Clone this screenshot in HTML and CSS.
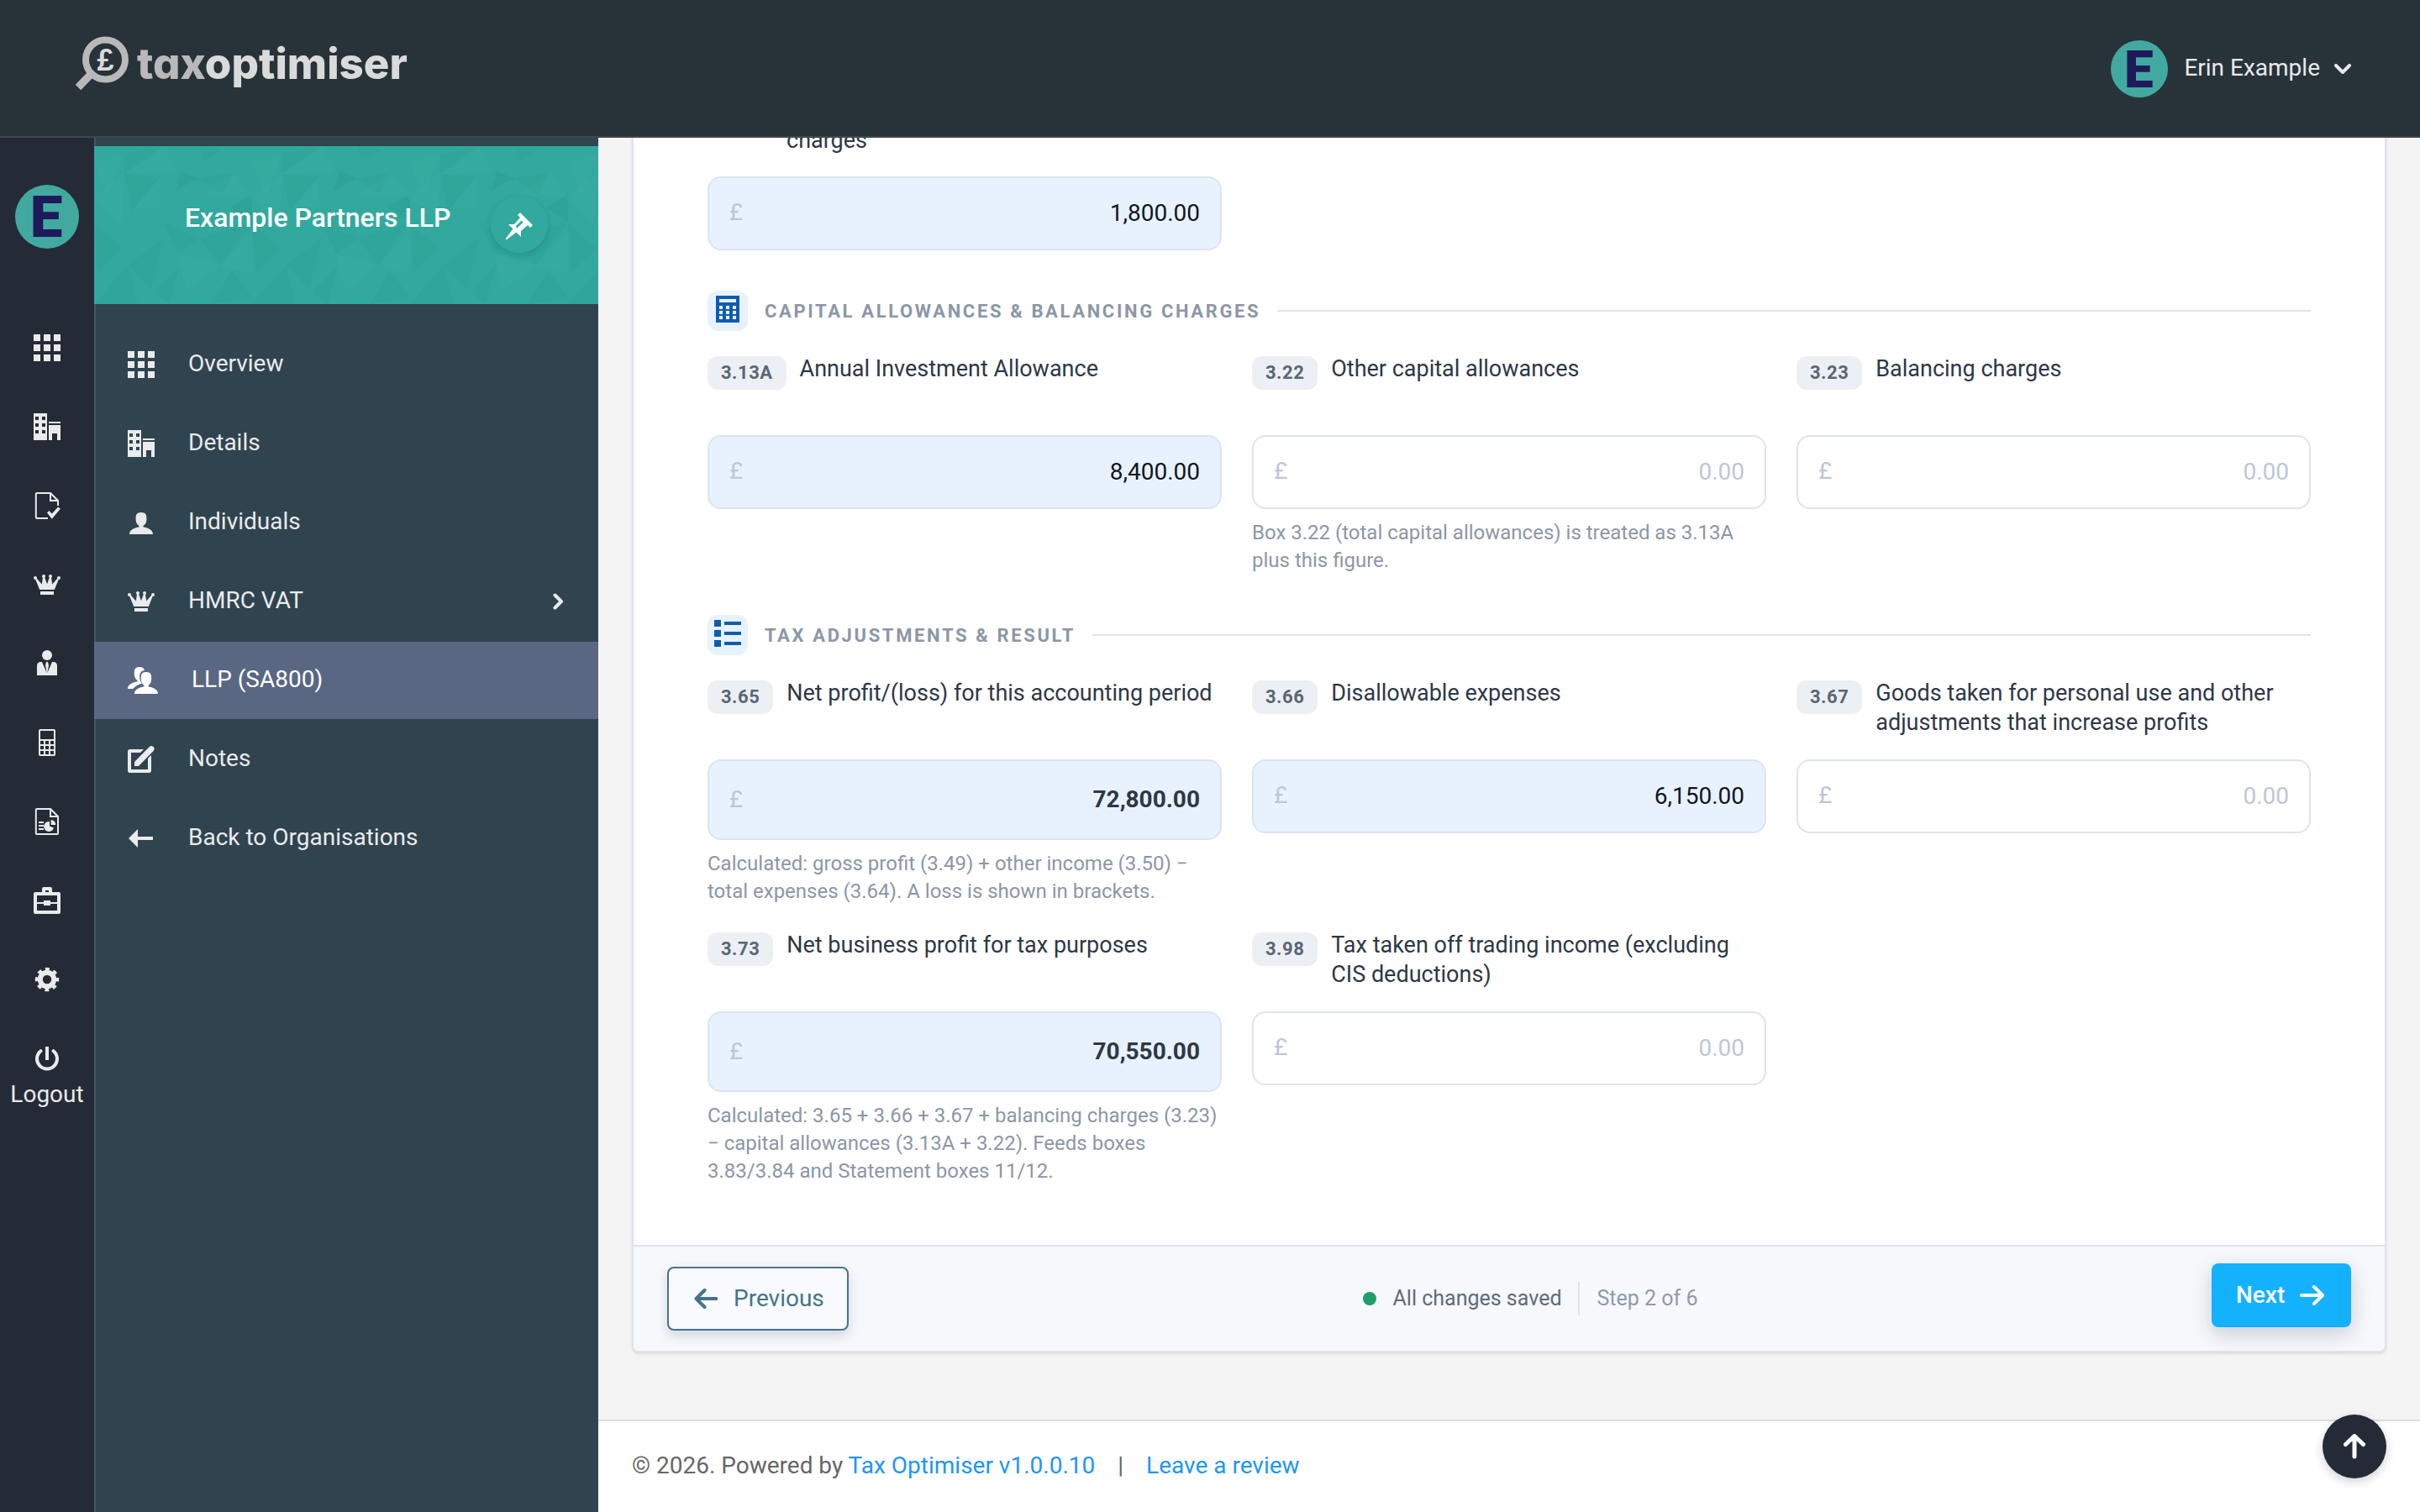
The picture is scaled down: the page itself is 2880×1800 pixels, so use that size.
FILE: index.html
```
<!DOCTYPE html>
<html lang="en">
<head>
  <meta charset="UTF-8" />
  <meta name="viewport" content="width=device-width, initial-scale=1.0" />
  <title>Tax Optimiser</title>
  <link rel="stylesheet" href="styles.css">
</head>
<body>
  <!-- icon sprite -->
  <svg class="sprite" aria-hidden="true">
    <symbol id="i-grid" viewBox="0 0 16 16"><path d="M0 0h4v4H0zM6 0h4v4H6zM12 0h4v4h-4zM0 6h4v4H0zM6 6h4v4H6zM12 6h4v4h-4zM0 12h4v4H0zM6 12h4v4H6zM12 12h4v4h-4z"/></symbol>
    <symbol id="i-city" viewBox="0 0 16 16"><path fill-rule="evenodd" d="M0 0h8v16H0zM1 2v2h2V2zM5 2v2h2V2zM1 6v2h2V6zM5 6v2h2V6zM1 10v2h2v-2zM5 10v2h2v-2zM9 5h7v1H9zM9 7h7v9h-2v-4h-3v4H9z"/></symbol>
    <symbol id="i-file-check" viewBox="0 0 16 16"><path fill="none" stroke="currentColor" d="M8.5 15.5H2c-.4 0-.6-.2-.6-.6V1.1c0-.4.2-.6.6-.6h8L14.5 5v3M10 .5V5h4.5"/><path d="M8 12.2l1.2-1.2 1.7 1.8 3.7-4 1.3 1.1-5 6z"/></symbol>
    <symbol id="i-crown" viewBox="0 0 16 16"><path d="M4 12h8v2H4zM3.6 11L1 4.6l.8-.4 3.1 3.6L5.6 3h.7L8 7.6 9.7 3h.7l.7 4.8 3.1-3.6.8.4L12.4 11z"/><circle cx="1" cy="4" r="1"/><circle cx="6" cy="3" r="1"/><circle cx="10" cy="3" r="1"/><circle cx="15" cy="4" r="1"/></symbol>
    <symbol id="i-user-tie" viewBox="0 0 16 16"><circle cx="8" cy="3" r="3"/><path fill-rule="evenodd" d="M2 15V9.200c0-1.300.9-2.200 2.200-2.200h7.600c1.300 0 2.200.9 2.200 2.200V15zM5 7l2.800 6.500L7 9l.5-2zM11 7l-2.800 6.500L9 9l-.5-2z"/></symbol>
    <symbol id="i-calc2" viewBox="0 0 16 16"><path fill-rule="evenodd" d="M4 0h8q1 0 1 1v14q0 1-1 1H4q-1 0-1-1V1q0-1 1-1zM4 1v5h8V1zM4 7v2h2V7zM7 7v2h2V7zM10 7v2h2V7zM4 10v2h2v-2zM7 10v2h2v-2zM10 10v2h2v-2zM4 13v2h2v-2zM7 13v2h2v-2zM10 13v2h2v-2z"/></symbol>
    <symbol id="i-file-stats" viewBox="0 0 16 16"><path fill="none" stroke="currentColor" d="M2 .5h8L14.500 5v10c0 .3-.2.5-.5.5H2c-.4 0-.6-.2-.6-.6V1.100c0-.4.2-.6.600-.6zM10 .5V5h4.500M3 8.500h3M3 10.500h3M3 12.500h3"/><path d="M9.500 8v2.700l2.500 1A3 3 0 1 1 9.500 8zM10.300 7a3 3 0 0 1 2.900 3h-2.900z"/></symbol>
    <symbol id="i-case" viewBox="0 0 16 16"><path fill-rule="evenodd" d="M5 3V1q0-1 1-1h4q1 0 1 1v2h4q1 0 1 1v11q0 1-1 1H1q-1 0-1-1V4q0-1 1-1zM7 2v1h2V2zM2 5v4h4V8h4v1h4V5zM2 10v4h12v-4h-4v1H6v-1z"/></symbol>
    <symbol id="i-cog" viewBox="0 0 16 16"><circle cx="8" cy="8" r="4.100" fill="none" stroke="currentColor" stroke-width="3"/><circle cx="8" cy="8" r="6.100" fill="none" stroke="currentColor" stroke-width="2" stroke-dasharray="2.400 2.391" stroke-dashoffset="1.200"/></symbol>
    <symbol id="i-power" viewBox="0 0 16 16"><path fill="none" stroke="currentColor" stroke-width="2" stroke-linecap="round" d="M4.200 3.600a6 6 0 1 0 7.600 0"/><path fill="none" stroke="currentColor" stroke-width="2" d="M8 1v8"/></symbol>
    <symbol id="i-user" viewBox="0 0 16 16"><path d="M9.300 10.700v-.8c1.100-.7 1.900-2 1.900-3.700 0-2.300 0-4.200-3.200-4.200S4.800 3.900 4.800 6.200c0 1.700.8 3 1.900 3.700v.8C3.700 11 1 12.500 1 15h14c0-2.500-2.700-4-5.700-4.300z"/></symbol>
    <symbol id="i-users" viewBox="0 0 18 16"><path d="M12.300 11.700v-.8c1-.6 1.800-2 1.800-3.700C14.100 5 14.100 3 11 3S7.900 5 7.900 7.200c0 1.700.8 3.100 1.800 3.700v.8C6.700 12 4 13.500 4 16h14c0-2.500-2.700-4-5.700-4.300z"/><path d="M5.100 11.200c1-.7 2.300-1.100 3.300-1.300-.9-1.300-1.300-2.600-1.300-3.800 0-2 .3-3.700 2.900-4.100C9.700.6 8.700 0 7 0 3.900 0 3.900 1.900 3.900 4.200c0 1.700.8 3 1.800 3.700v.8C2.700 9 0 10.500 0 13h3.100c.5-.7 1.200-1.300 2-1.800z"/></symbol>
    <symbol id="i-compose" viewBox="0 0 16 16"><path d="M12 7.500V14H2V4h5.500l2-2H1.300C.6 2 0 2.600 0 3.300v11.400c0 .7.6 1.300 1.300 1.300h11.400c.7 0 1.300-.6 1.300-1.300V5.500z"/><path d="M4 9.500L12.800.600c.7-.7 1.600-.8 2.300-.2.900.8.900 1.800.2 2.600L6.500 12H4z"/></symbol>
    <symbol id="i-back" viewBox="0 0 16 16"><path d="M.5 8L6 2.500V7h9v2H6v4.500z"/></symbol>
    <symbol id="i-pin" viewBox="0 0 16 16"><path d="M8.500 0L7 1.500 8.500 3 5 7H1.500l2.750 2.750L0 15.385V16h.615l5.635-4.250L9 14.500V11l4-3.500L14.500 9 16 7.500zM6.750 9.250l-1-1 3.500-3.500 1 1z"/></symbol>
    <symbol id="i-calc" viewBox="0 0 16 16"><path fill-rule="evenodd" d="M1 0h14v16H1zM3 2v2h10V2zM3 6v2h2V6zM7 6v2h2V6zM11 6v2h2V6zM3 9v2h2V9zM7 9v2h2V9zM11 9v2h2V9zM3 12v2h2v-2zM7 12v2h2v-2zM11 12v2h2v-2z"/></symbol>
    <symbol id="i-list" viewBox="0 0 16 16"><path d="M0 0h4v4H0zM6 1h10v2H6zM0 6h4v4H0zM6 7h10v2H6zM0 12h4v4H0zM6 13h10v2H6z"/></symbol>
  </svg>

  <header class="navbar">
    <a class="logo">
      <svg class="logo-mark" width="66" height="68" viewBox="0 0 66 68">
        <circle cx="37.500" cy="30" r="23.500" fill="none" stroke="#b9b9b9" stroke-width="8"/>
        <path d="M5 63L20 47.500" stroke="#b9b9b9" stroke-width="9"/>
        <text x="37.500" y="43" text-anchor="middle" class="logo-pound">£</text>
      </svg>
      <span class="logo-text"><span class="logo-tax">tax</span>optimiser</span>
    </a>
    <div class="user-menu">
      <span class="avatar avatar-sm">E</span>
      <span>Erin Example</span>
      <svg class="caret" width="20" height="12" viewBox="0 0 20 12"><path d="M2 2l8 8 8-8"/></svg>
    </div>
  </header>

  <div class="page">
    <nav class="rail">
      <span class="avatar">E</span>
      <ul>
        <li><svg class="icon"><use href="#i-grid"/></svg></li>
        <li><svg class="icon"><use href="#i-city"/></svg></li>
        <li><svg class="icon"><use href="#i-file-check"/></svg></li>
        <li><svg class="icon"><use href="#i-crown"/></svg></li>
        <li><svg class="icon"><use href="#i-user-tie"/></svg></li>
        <li><svg class="icon"><use href="#i-calc2"/></svg></li>
        <li><svg class="icon"><use href="#i-file-stats"/></svg></li>
        <li><svg class="icon"><use href="#i-case"/></svg></li>
        <li><svg class="icon"><use href="#i-cog"/></svg></li>
        <li><svg class="icon"><use href="#i-power"/></svg></li>
      </ul>
      <span class="logout">Logout</span>
    </nav>

    <aside class="sidebar">
      <div class="org">
        <svg class="org-bg" width="600" height="188">
          <defs>
            <pattern id="tri" width="188" height="188" patternUnits="userSpaceOnUse">
              <g fill="#000" fill-opacity=".02">
                <path d="M97 53l6-23 21 8z" fill-opacity=".035"/>
                <path d="M162 73l24-15 7 35z" fill-opacity=".035"/>
                <path d="M36 9L82 1 36 33z"/>
                <path d="M36 33l43 4-34 40z"/>
                <path d="M100 128l-18-38 44 20z"/>
                <path d="M124 38l42-6-14 26z"/>
                <path d="M40 142l42-32-14 60z"/>
                <path d="M0 92l34 30-30 28z"/>
                <path d="M126 110l60-18-36 50z"/>
                <path d="M90 188l12-46-30 32z"/>
                <path d="M0 188l40-46 12 46z"/>
                <path d="M126 0l4 18 24-14z"/>
                <path d="M140 188l24-40 24 32z"/>
              </g>
              <g fill="#fff" fill-opacity=".018">
                <path d="M48 75l30-38 2 35z"/>
                <path d="M0 60l36-27-4 60z"/>
                <path d="M128 58l38-26 20 28z"/>
                <path d="M150 142l38-40v50z"/>
                <path d="M100 128l50 14-40 30z"/>
                <path d="M36 33L82 1l16 30z"/>
                <path d="M0 20L36 9l-20 50z"/>
              </g>
            </pattern>
          </defs>
          <rect width="600" height="188" fill="url(#tri)"/>
        </svg>
        <h5>Example Partners LLP</h5>
        <span class="pin"><svg class="icon"><use href="#i-pin"/></svg></span>
      </div>
      <ul class="nav">
        <li><svg class="icon"><use href="#i-grid"/></svg><span>Overview</span></li>
        <li><svg class="icon"><use href="#i-city"/></svg><span>Details</span></li>
        <li><svg class="icon"><use href="#i-user"/></svg><span>Individuals</span></li>
        <li><svg class="icon"><use href="#i-crown"/></svg><span>HMRC VAT</span>
          <svg class="arrow" width="13" height="20" viewBox="0 0 13 20"><path d="M2.500 2.500L10 10l-7.500 7.500"/></svg></li>
        <li class="active"><svg class="icon icon-wide"><use href="#i-users"/></svg><span>LLP (SA800)</span></li>
        <li><svg class="icon"><use href="#i-compose"/></svg><span>Notes</span></li>
        <li><svg class="icon"><use href="#i-back"/></svg><span>Back to Organisations</span></li>
      </ul>
    </aside>

    <main class="main">
      <div class="card">
        <div class="card-body">
          <div class="fields">
            <div class="field">
              <label class="cont">charges</label>
              <div class="input filled"><i>£</i><span>1,800.00</span></div>
            </div>
          </div>

          <div class="section-head">
            <span class="section-icon"><svg class="icon"><use href="#i-calc"/></svg></span>
            <h6>CAPITAL ALLOWANCES &amp; BALANCING CHARGES</h6>
          </div>
          <div class="fields">
            <div class="field">
              <label><b class="box">3.13A</b><span>Annual Investment Allowance</span></label>
              <div class="input filled"><i>£</i><span>8,400.00</span></div>
            </div>
            <div class="field">
              <label><b class="box">3.22</b><span>Other capital allowances</span></label>
              <div class="input"><i>£</i><span>0.00</span></div>
              <p class="hint">Box 3.22 (total capital allowances) is treated as 3.13A<br>plus this figure.</p>
            </div>
            <div class="field">
              <label><b class="box">3.23</b><span>Balancing charges</span></label>
              <div class="input"><i>£</i><span>0.00</span></div>
            </div>
          </div>

          <div class="section-head">
            <span class="section-icon"><svg class="icon"><use href="#i-list"/></svg></span>
            <h6>TAX ADJUSTMENTS &amp; RESULT</h6>
          </div>
          <div class="fields">
            <div class="field">
              <label><b class="box">3.65</b><span>Net profit/(loss) for this accounting period</span></label>
              <div class="input filled total"><i>£</i><span>72,800.00</span></div>
              <p class="hint">Calculated: gross profit (3.49) + other income (3.50) −<br>total expenses (3.64). A loss is shown in brackets.</p>
            </div>
            <div class="field">
              <label><b class="box">3.66</b><span>Disallowable expenses</span></label>
              <div class="input filled"><i>£</i><span>6,150.00</span></div>
            </div>
            <div class="field">
              <label><b class="box">3.67</b><span>Goods taken for personal use and other<br>adjustments that increase profits</span></label>
              <div class="input"><i>£</i><span>0.00</span></div>
            </div>
            <div class="field">
              <label><b class="box">3.73</b><span>Net business profit for tax purposes</span></label>
              <div class="input filled total"><i>£</i><span>70,550.00</span></div>
              <p class="hint">Calculated: 3.65 + 3.66 + 3.67 + balancing charges (3.23)<br>− capital allowances (3.13A + 3.22). Feeds boxes<br>3.83/3.84 and Statement boxes 11/12.</p>
            </div>
            <div class="field">
              <label><b class="box">3.98</b><span>Tax taken off trading income (excluding<br>CIS deductions)</span></label>
              <div class="input"><i>£</i><span>0.00</span></div>
            </div>
          </div>
        </div>

        <div class="card-footer">
          <button class="btn btn-prev">
            <svg width="28" height="24" viewBox="0 0 28 24"><path d="M12.500 2L2.500 12l10 10M3 12h23.500"/></svg>
            Previous
          </button>
          <div class="status">
            <span class="dot"></span>
            <span class="saved">All changes saved</span>
            <span class="step">Step 2 of 6</span>
          </div>
          <button class="btn btn-next">
            Next
            <svg width="30" height="24" viewBox="0 0 30 24"><path d="M17 2l10 10-10 10M2 12h24.500"/></svg>
          </button>
        </div>
      </div>

      <footer class="footer">
        <span>© 2026. Powered by <a>Tax Optimiser v1.0.0.10</a></span>
        <span class="sep">|</span>
        <a>Leave a review</a>
      </footer>
    </main>
  </div>

  <span class="to-top"><svg width="26" height="30" viewBox="0 0 26 30"><path d="M2.500 12.500L13 2.500l10.500 10M13 3.500V27"/></svg></span>
</body>
</html>
```

FILE: styles.css
```
:root {
  --dark: #252b36;
  --border: #dde4ee;
  --fill: #e8f2fe;
  --text: #2d3846;
  --muted: #8b97a7;
}

* { box-sizing: border-box; }
body {
  margin: 0;
  height: 1800px;
  overflow: hidden;
  font-family: Roboto, "Liberation Sans", sans-serif;
  font-size: 28px;
  line-height: 40px;
  color: var(--text);
  background: #f4f4f4;
}
ul { list-style: none; margin: 0; padding: 0; }
.sprite { position: absolute; width: 0; height: 0; }
.icon { width: 32px; height: 32px; fill: currentColor; flex: none; display: block; }
.icon-wide { width: 36px; }

/* top bar */
.navbar {
  position: fixed;
  top: 0;
  left: 0;
  right: 0;
  z-index: 10;
  height: 164px;
  padding: 0 82px 0 88px;
  display: flex;
  justify-content: space-between;
  align-items: flex-start;
  background: #283339;
  border-bottom: 2px solid #3e484d;
}
.logo { display: flex; padding-top: 41px; gap: 9px; }
.logo-pound { font: 700 36px "Liberation Sans", sans-serif; fill: #dadada; }
.logo-text {
  font-family: Inter, sans-serif;
  font-feature-settings: "cv11";
  font-size: 51px;
  font-weight: 800;
  line-height: 70px;
  letter-spacing: 0;
  color: #dadada;
}
.logo-tax { color: #b9b9b9; }
.user-menu {
  display: flex;
  align-items: center;
  padding-top: 48px;
  color: #e9eaeb;
}
.user-menu .avatar { margin-right: 19px; }
.user-menu span + span { margin-top: -3px; }
.caret { margin-left: 17px; fill: none; stroke: #e9eaeb; stroke-width: 4; stroke-linecap: round; stroke-linejoin: round; }

.avatar {
  width: 76px;
  height: 76px;
  padding-right: 2px;
  border-radius: 50%;
  background: #42a9a0;
  color: #1e1a5a;
  font-size: 69px;
  font-weight: 900;
  line-height: 77px;
  text-align: center;
  flex: none;
}
.avatar-sm { width: 68px; height: 68px; font-size: 62px; line-height: 69px; }

.page { display: flex; height: 1800px; }

/* icon rail */
.rail {
  width: 112px;
  padding-top: 220px;
  display: flex;
  flex-direction: column;
  align-items: center;
  background: var(--dark);
  color: #e9eaeb;
  flex: none;
}
.rail ul { margin-top: 71px; }
.rail li { height: 94px; display: flex; align-items: center; }
.logout { margin-top: -24px; }

/* organisation sidebar */
.sidebar {
  width: 600px;
  padding-top: 174px;
  background: #30444f;
  box-shadow: inset 2px 0 #46575f;
  flex: none;
}
.org {
  position: relative;
  height: 188px;
  display: flex;
  justify-content: space-between;
  padding: 59px 60px 0 108px;
  background: #31a99e;
  color: #fff;
}
.org-bg { position: absolute; top: 0; left: 0; }
.org h5 { position: relative; margin: 6px 0 0; font-size: 32px; font-weight: 500; line-height: 41px; }
.pin {
  position: relative;
  width: 68px;
  height: 68px;
  border-radius: 50%;
  background: #31a99e;
  box-shadow: 0 4px 8px rgba(0, 0, 0, .13);
  display: flex;
  align-items: center;
  justify-content: center;
}
.pin .icon { margin-top: 4px; }
.nav { padding-top: 26px; }
.nav li {
  height: 92px;
  margin-bottom: 2px;
  padding: 0 41px 0 40px;
  display: flex;
  align-items: center;
  color: #e9ebec;
}
.nav span { margin: -2px 0 0 40px; }
.nav .active { background: #5a6782; color: #fff; }
.nav .active span { margin-left: 40px; }
.arrow { margin-left: auto; fill: none; stroke: currentColor; stroke-width: 4; stroke-linecap: round; stroke-linejoin: round; }

/* form card */
.main { flex: 1; display: flex; flex-direction: column; }
.card {
  margin: 0 40px;
  border: 2px solid var(--border);
  border-top: 0;
  border-radius: 0 0 8px 8px;
  background: #fff;
  box-shadow: 0 2px 3px rgba(0, 0, 0, .1);
}
.card-body { padding: 112px 88px 71px; }
.section-head { display: flex; align-items: center; margin: 48px 0 26px; }
.section-head h6 {
  margin: 1px 20px 0;
  font-size: 22px;
  font-weight: 700;
  line-height: 30px;
  letter-spacing: 2.64px;
  color: var(--muted);
}
.section-head::after { content: ""; flex: 1; height: 2px; background: var(--border); }
.section-icon {
  width: 48px;
  height: 48px;
  padding: 6px 8px;
  border-radius: 12px;
  background: var(--fill);
  color: #0e5cb1;
}

.fields { display: grid; grid-template-columns: repeat(3, 612px); gap: 28px 36px; }
.field label {
  display: flex;
  align-items: flex-start;
  gap: 16px;
  height: 98px;
  padding-top: 2px;
  font-size: 27px;
  line-height: 35px;
}
.field .cont { padding: 38px 0 0 94px; }
.box {
  margin-top: 2px;
  padding: 0 16px;
  border-radius: 12px;
  background: #ecf0f5;
  color: #5a6675;
  font-size: 22px;
  line-height: 40px;
  letter-spacing: .5px;
}
.input {
  height: 88px;
  padding: 0 24px;
  display: flex;
  align-items: center;
  justify-content: space-between;
  border: 2px solid var(--border);
  border-radius: 16px;
  background: #fff;
  color: #bcc7d6;
}
.input i { font-style: normal; color: #bcc7d4; margin-top: -2px; }
.filled { background: var(--fill); }
.filled span { color: #10161f; }
.total { height: 96px; font-size: 28px; }
.total i { margin-top: 0; }
.total span { font-weight: 700; color: var(--text); }
.hint { margin: 12px 0 0; font-size: 24px; line-height: 33px; color: var(--muted); white-space: nowrap; }

.card-footer {
  height: 126px;
  padding: 0 40px;
  display: flex;
  align-items: center;
  justify-content: space-between;
  border-top: 2px solid var(--border);
  border-radius: 0 0 6px 6px;
  background: #f6f8fc;
}
.btn {
  height: 76px;
  display: flex;
  align-items: center;
  border-radius: 8px;
  font: 400 28px/40px Roboto, sans-serif;
}
.btn svg { fill: none; stroke: currentColor; stroke-width: 4; stroke-linecap: round; stroke-linejoin: round; }
.btn-prev {
  width: 216px;
  padding: 0 0 0 30px;
  gap: 19px;
  border: 2px solid #45748a;
  background: #f8fafd;
  color: #45748a;
  box-shadow: 0 6px 14px rgba(30, 30, 60, .16);
}
.btn-next {
  width: 166px;
  padding: 0 0 0 29px;
  margin-bottom: 8px;
  gap: 18px;
  border: 0;
  background: #14b1ff;
  color: #fff;
  font-weight: 500;
  box-shadow: 0 8px 24px rgba(30, 30, 60, .2);
}
.status { display: flex; align-items: center; font-size: 25px; }
.dot { width: 16px; height: 16px; border-radius: 50%; background: #1f9e6a; }
.saved { margin-left: 20px; color: #5f6b7a; }
.step { margin-left: 20px; padding-left: 20px; border-left: 2px solid var(--border); color: #8f9aa9; }

.footer {
  height: 110px;
  margin-top: auto;
  padding: 33px 40px 0;
  display: flex;
  border-top: 2px solid #ddd;
  background: #fff;
  color: #666;
}
.footer a { color: #2196f3; }
.sep { margin: 0 27px; }

.to-top {
  position: fixed;
  right: 40px;
  bottom: 40px;
  width: 76px;
  height: 76px;
  border-radius: 50%;
  background: var(--dark);
  display: flex;
  align-items: center;
  justify-content: center;
  box-shadow: 0 4px 12px rgba(30, 20, 60, .2);
}
.to-top svg { fill: none; stroke: #fff; stroke-width: 5; stroke-linecap: round; stroke-linejoin: round; }
```
